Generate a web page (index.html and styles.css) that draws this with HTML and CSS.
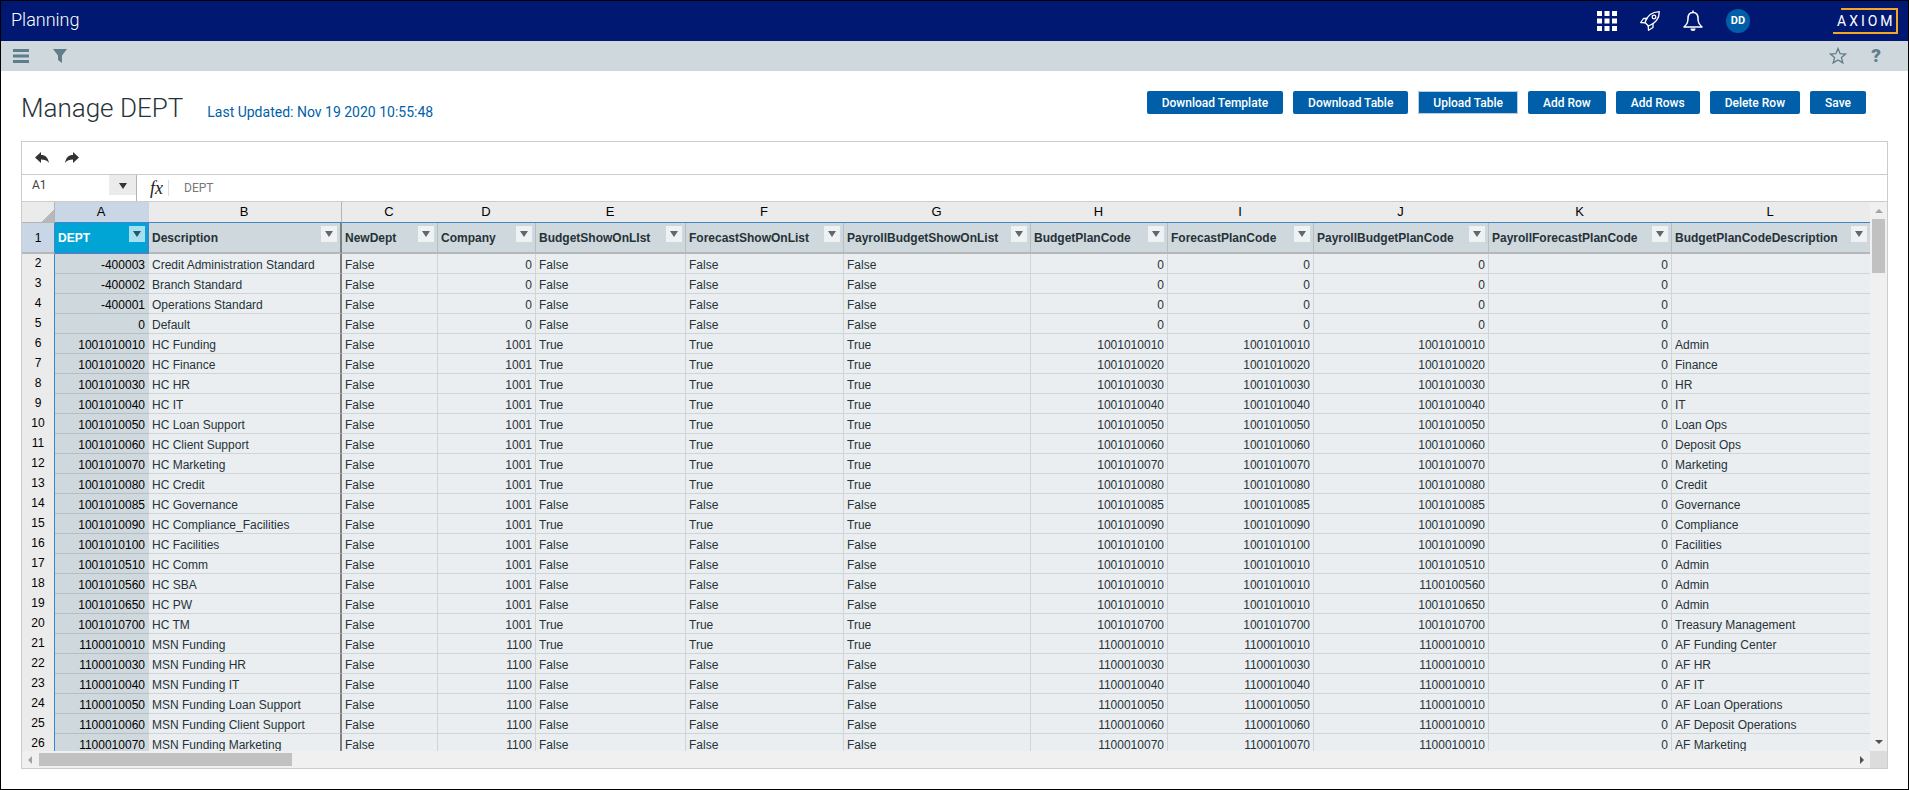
FILE: index.html
```
<!DOCTYPE html>
<html lang="en">

<head>
    <meta charset="utf-8">
    <meta name="viewport" content="width=device-width, initial-scale=1.0">

    <title>Planning - Manage DEPT</title>
    <link rel="stylesheet" href="styles.css">
</head>

<body>
    <header class="topbar">
        <span class="product">Planning</span>
        <div class="topbar-icons">
            <button class="icon-button" aria-label="Applications">
                <svg width="20" height="20" viewBox="0 0 20 20" fill="#fff">
                    <path d="M0 0h5v5H0zM7.500 0h5v5h-5zM15 0h5v5h-5zM0 7.500h5v5H0zM7.500 7.500h5v5h-5zM15 7.500h5v5h-5zM0 15h5v5H0zM7.500 15h5v5h-5zM15 15h5v5h-5z" />
                </svg>
            </button>
            <button class="icon-button" aria-label="Quick launch">
                <svg width="20" height="20" viewBox="0 0 20 20" fill="none" stroke="#fff" stroke-width="1.300" stroke-linejoin="round" stroke-linecap="round">
                    <path d="M5 11.500C7 5 12 1 19.300.7 19.300 7 16 12 8.500 15z" />
                    <path d="M7 7.500H3.500L.7 11.500l4.300.3M13 12.500v4l-4.500 2.800L8.200 15" />
                    <circle cx="14" cy="6" r="1.800" />
                </svg>
            </button>
            <button class="icon-button" aria-label="Notifications">
                <svg width="20" height="22" viewBox="0 0 20 22" fill="none" stroke="#fff" stroke-width="1.500" stroke-linejoin="round">
                    <path d="M10 2.500c-3.500 0-5 2.500-5 6 0 4.500-1.500 6-4 8.500h18c-2.500-2.500-4-4-4-8.500 0-3.500-1.500-6-5-6z" />
                    <path d="M10 .5v2" />
                    <path d="M7.500 18.500h5a2.500 2.500 0 0 1-5 0z" fill="#fff" stroke="none" />
                </svg>
            </button>
            <button class="avatar" aria-label="Account">DD</button>
            <div class="logo">
                <svg class="logo-frame" width="66" height="28" viewBox="0 0 66 28" fill="none" stroke="#f5a623" stroke-width="2">
                    <path d="M8 2H64V26H0" />
                </svg>
                <span class="logo-text">AXIOM</span>
            </div>
        </div>
    </header>

    <nav class="subbar">
        <button class="icon-button" aria-label="Menu">
            <svg width="16" height="14" viewBox="0 0 16 14" fill="#607d8b">
                <path d="M0 0h16v3H0zM0 5.500h16v3H0zM0 11h16v3H0z" />
            </svg>
        </button>
        <button class="icon-button" aria-label="Filter">
            <svg width="14" height="14" viewBox="0 0 14 14" fill="#607d8b">
                <path d="M0 0h14L9 6.500V14L5 11V6.500z" />
            </svg>
        </button>
        <span class="spacer"></span>
        <button class="icon-button" aria-label="Favorite">
            <svg width="18" height="17" viewBox="0 0 18 17" fill="none" stroke="#607d8b" stroke-width="1.300">
                <path d="M9 1.500l2.100 5.200 5.500.3-4.200 3.500 1.400 5.400L9 12.900l-4.800 3 1.400-5.400L1.400 7l5.500-.3z" />
            </svg>
        </button>
        <button class="icon-button help" aria-label="Help">?</button>
    </nav>

    <main class="page">
        <div class="page-head">
            <h1>Manage DEPT</h1>
            <span class="updated">Last Updated: Nov 19 2020 10:55:48</span>
            <div class="actions">
                <button class="btn">Download Template</button>
                <button class="btn">Download Table</button>
                <button class="btn btn-focus">Upload Table</button>
                <button class="btn">Add Row</button>
                <button class="btn">Add Rows</button>
                <button class="btn">Delete Row</button>
                <button class="btn">Save</button>
            </div>
        </div>

        <section class="sheet">
            <div class="sheet-tools">
                <button class="icon-button" aria-label="Undo">
                    <svg width="14" height="12" viewBox="0 0 14 12" fill="#333">
                        <path d="M6 0v3c4.500 0 7 2.500 8 8-2-3-4.500-3.500-8-3.500V11L0 5.500z" />
                    </svg>
                </button>
                <button class="icon-button" aria-label="Redo">
                    <svg width="14" height="12" viewBox="0 0 14 12" fill="#333">
                        <path d="M8 0v3C3.500 3 1 5.500 0 11c2-3 4.500-3.500 8-3.500V11l6-5.500z" />
                    </svg>
                </button>
            </div>

            <div class="formula-bar">
                <div class="name-box">
                    <input class="name-input" type="text" value="A1" aria-label="Cell">
                    <button class="name-drop" aria-label="Named ranges"><span class="tri-down"></span></button>
                </div>
                <span class="fx">fx</span>
                <input class="formula-input" type="text" value="DEPT" aria-label="Formula">
            </div>

            <div class="grid-area">
                <div class="grid-view">
                    <table class="grid">
                        <colgroup id="cols"></colgroup>
                        <thead>
                            <tr class="letters" id="letters"></tr>
                            <tr class="titles" id="titles"></tr>
                        </thead>
                        <tbody id="rows"></tbody>
                    </table>
                </div>
                <div class="vscroll">
                    <span class="tri-up"></span>
                    <div class="vthumb"></div>
                    <span class="spacer"></span>
                    <span class="tri-down dark"></span>
                </div>
                <div class="hscroll">
                    <span class="tri-left"></span>
                    <div class="hthumb"></div>
                    <span class="spacer"></span>
                    <span class="tri-right"></span>
                </div>
                <div class="corner"></div>
            </div>
        </section>
    </main>

    <script>
        // name, width, 1 if the column is numeric
        const columns = [
            ['DEPT', 94, 1],
            ['Description', 193, 0],
            ['NewDept', 96, 0],
            ['Company', 98, 1],
            ['BudgetShowOnLIst', 150, 0],
            ['ForecastShowOnList', 158, 0],
            ['PayrollBudgetShowOnList', 187, 0],
            ['BudgetPlanCode', 137, 1],
            ['ForecastPlanCode', 146, 1],
            ['PayrollBudgetPlanCode', 175, 1],
            ['PayrollForecastPlanCode', 183, 1],
            ['BudgetPlanCodeDescription', 198, 0]
        ];

        // dept, description, company, show on list, plan code, payroll plan code, plan code description
        const depts = [
            ['-400003', 'Credit Administration Standard', 0, 'False', 0, 0, ''],
            ['-400002', 'Branch Standard', 0, 'False', 0, 0, ''],
            ['-400001', 'Operations Standard', 0, 'False', 0, 0, ''],
            ['0', 'Default', 0, 'False', 0, 0, ''],
            ['1001010010', 'HC Funding', 1001, 'True', 1001010010, 1001010010, 'Admin'],
            ['1001010020', 'HC Finance', 1001, 'True', 1001010020, 1001010020, 'Finance'],
            ['1001010030', 'HC HR', 1001, 'True', 1001010030, 1001010030, 'HR'],
            ['1001010040', 'HC IT', 1001, 'True', 1001010040, 1001010040, 'IT'],
            ['1001010050', 'HC Loan Support', 1001, 'True', 1001010050, 1001010050, 'Loan Ops'],
            ['1001010060', 'HC Client Support', 1001, 'True', 1001010060, 1001010060, 'Deposit Ops'],
            ['1001010070', 'HC Marketing', 1001, 'True', 1001010070, 1001010070, 'Marketing'],
            ['1001010080', 'HC Credit', 1001, 'True', 1001010080, 1001010080, 'Credit'],
            ['1001010085', 'HC Governance', 1001, 'False', 1001010085, 1001010085, 'Governance'],
            ['1001010090', 'HC Compliance_Facilities', 1001, 'True', 1001010090, 1001010090, 'Compliance'],
            ['1001010100', 'HC Facilities', 1001, 'False', 1001010100, 1001010090, 'Facilities'],
            ['1001010510', 'HC Comm', 1001, 'False', 1001010010, 1001010510, 'Admin'],
            ['1001010560', 'HC SBA', 1001, 'False', 1001010010, 1100100560, 'Admin'],
            ['1001010650', 'HC PW', 1001, 'False', 1001010010, 1001010650, 'Admin'],
            ['1001010700', 'HC TM', 1001, 'True', 1001010700, 1001010700, 'Treasury Management'],
            ['1100010010', 'MSN Funding', 1100, 'True', 1100010010, 1100010010, 'AF Funding Center'],
            ['1100010030', 'MSN Funding HR', 1100, 'False', 1100010030, 1100010010, 'AF HR'],
            ['1100010040', 'MSN Funding IT', 1100, 'False', 1100010040, 1100010010, 'AF IT'],
            ['1100010050', 'MSN Funding Loan Support', 1100, 'False', 1100010050, 1100010010, 'AF Loan Operations'],
            ['1100010060', 'MSN Funding Client Support', 1100, 'False', 1100010060, 1100010010, 'AF Deposit Operations'],
            ['1100010070', 'MSN Funding Marketing', 1100, 'False', 1100010070, 1100010010, 'AF Marketing']
        ];

        let cols = '<col class="col-head">';
        let letters = '<td class="select-all"></td>';
        let titles = '<th class="row-no" scope="row">1</th>';

        columns.forEach((col, i) => {
            cols += `<col style="width: ${col[1]}px">`;
            letters += `<th scope="col">${String.fromCharCode(65 + i)}</th>`;
            titles += `<td><div class="title">${col[0]}<button class="filter" aria-label="Filter ${col[0]}"><span class="tri-down"></span></button></div></td>`;
        });

        document.getElementById('cols').innerHTML = cols;
        document.getElementById('letters').innerHTML = letters;
        document.getElementById('titles').innerHTML = titles;

        document.getElementById('rows').innerHTML = depts.map((d, r) => {
            const [dept, name, company, show, plan, payroll, planName] = d;
            const cells = [dept, name, 'False', company, show, show, show, plan, plan, payroll, 0, planName];
            return `<tr><th class="row-no" scope="row">${r + 2}</th>` +
                cells.map((c, i) => `<td${columns[i][2] ? ' class="num"' : ''}>${c}</td>`).join('') + '</tr>';
        }).join('');
    </script>
</body>

</html>
```
FILE: styles.css
```
* {
    box-sizing: border-box;
}

body {
    margin: 0;
    height: 100vh;
    display: flex;
    flex-direction: column;
    border: 1px solid #000;
    background-color: #fff;
    font-family: Roboto, sans-serif;
    color: #263238;
}

button {
    font-family: inherit;
    border: none;
    padding: 0;
    cursor: pointer;
}

input {
    font-family: inherit;
    border: none;
    padding: 0;
    outline: none;
    background: none;
}

.spacer {
    flex: 1;
}

.icon-button {
    display: flex;
    align-items: center;
    justify-content: center;
    background: none;
}

/* top bars */

.topbar {
    display: flex;
    align-items: center;
    justify-content: space-between;
    height: 40px;
    flex-shrink: 0;
    padding: 0 9px 1px 10px;
    background-color: #001872;
    color: #fff;
}

.product {
    font-size: 18px;
    line-height: 20px;
    padding-bottom: 1px;
    font-weight: 300;
}

.topbar-icons {
    display: flex;
    align-items: center;
    gap: 23px;
}

.avatar {
    width: 24px;
    height: 24px;
    border-radius: 50%;
    background-color: #005fa8;
    color: #fff;
    font-size: 11px;
    font-weight: 700;
}

.logo {
    display: grid;
    margin-left: 60px;
}

.logo-frame,
.logo-text {
    grid-area: 1 / 1;
}

.logo-text {
    align-self: center;
    padding-left: 4px;
    font-size: 14px;
    letter-spacing: 3px;
}

.subbar {
    display: flex;
    align-items: center;
    height: 30px;
    flex-shrink: 0;
    gap: 24px;
    padding: 0 27px 1px 12px;
    background-color: #cfd8dc;
}

.help {
    font-size: 19px;
    font-weight: 900;
    color: #607d8b;
}

/* page */

.page {
    flex: 1;
    min-height: 0;
    display: flex;
    flex-direction: column;
    padding: 19px 20px 20px 20px;
}

.page-head {
    display: flex;
    align-items: baseline;
    height: 51px;
    flex-shrink: 0;
}

h1 {
    margin: 0;
    font-size: 26px;
    line-height: 36px;
    font-weight: 300;
}

.updated {
    margin-left: 24px;
    font-size: 14px;
    color: #005fa8;
}

.actions {
    display: flex;
    align-self: flex-start;
    gap: 10px;
    margin-left: auto;
    padding: 1px 22px 0 0;
}

.btn {
    height: 23px;
    padding: 0 15px;
    border-radius: 2px;
    background-color: #005fa8;
    color: #fff;
    font-size: 12px;
    font-weight: 500;
    white-space: nowrap;
}

.btn-focus {
    box-shadow: inset 0 0 0 1px #b9cfe0;
}

/* spreadsheet */

.sheet {
    flex: 1;
    min-height: 0;
    display: flex;
    flex-direction: column;
    border: 1px solid #ccc;
}

.sheet-tools {
    display: flex;
    align-items: center;
    gap: 16px;
    height: 33px;
    flex-shrink: 0;
    padding-left: 13px;
    border-bottom: 1px solid #ccc;
}

.formula-bar {
    display: flex;
    align-items: center;
    height: 27px;
    flex-shrink: 0;
    border-bottom: 1px solid #ccc;
}

.name-box {
    display: flex;
    align-items: flex-start;
    align-self: stretch;
    width: 115px;
    border-right: 1px solid #b4b4b4;
}

.name-input {
    flex: 1;
    min-width: 0;
    height: 20px;
    padding-left: 10px;
    font-size: 12px;
    color: #444;
}

.name-drop {
    display: flex;
    align-items: center;
    justify-content: center;
    width: 27px;
    height: 20px;
    padding-top: 2px;
    background-color: #ebebeb;
}

.fx {
    width: 32px;
    padding-left: 13px;
    border-right: 1px solid #ddd;
    font: italic 18px/16px "Liberation Serif", serif;
    color: #222;
}

.formula-input {
    flex: 1;
    padding-left: 15px;
    font-size: 12px;
    color: #777;
}

.tri-down,
.tri-up,
.tri-left,
.tri-right {
    width: 0;
    height: 0;
    border: 4px solid transparent;
}

.tri-down {
    border-top: 6px solid #333;
    border-bottom: none;
}

.tri-down.dark {
    border-top: 4px solid #505050;
}

.tri-up {
    border-bottom: 4px solid #a3a3a3;
    border-top: none;
}

.tri-left {
    border-right: 4px solid #a3a3a3;
    border-left: none;
}

.tri-right {
    border-left: 4px solid #505050;
    border-right: none;
}

.grid-area {
    flex: 1;
    min-height: 0;
    display: grid;
    grid-template-columns: minmax(0, 1fr) 17px;
    grid-template-rows: minmax(0, 1fr) 17px;
    font-family: "Liberation Sans", Arial, sans-serif;
    font-size: 12px;
}

.grid-view {
    overflow: hidden;
}

.grid {
    width: 100%;
    table-layout: fixed;
    border-collapse: separate;
    border-spacing: 0;
}

.col-head {
    width: 33px;
}

.grid th,
.grid td {
    padding: 0 3px;
    white-space: nowrap;
    overflow: hidden;
}

.grid .letters th,
.grid .select-all {
    height: 21px;
    padding: 0 4px 1px 2px;
    background-color: #ebebeb;
    border-bottom: 1px solid #3c87c7;
    font-weight: 400;
    font-size: 13px;
    line-height: 16px;
    color: #000;
}

.grid .letters th:nth-child(2) {
    background-color: #c8d6e5;
}

.letters th:nth-child(3) {
    border-right: 1px solid #b4b4b4;
}

.grid .select-all {
    border-right: 1px solid #b4b4b4;
    border-bottom-color: #b4b4b4;
    background-image: linear-gradient(135deg, transparent 50%, #b8b8b8 50%);
    background-repeat: no-repeat;
    background-position: right bottom;
    background-size: 12px 12px;
}

.row-no {
    background-color: #ebebeb;
    border-right: 1px solid #3c87c7;
    font-weight: 400;
    color: #000;
}

.grid tbody .row-no {
    padding-bottom: 2px;
}

.grid tbody td {
    height: 20px;
    padding-top: 3px;
    line-height: 16px;
    background-color: #eaeef1;
    border-right: 1px solid #cfd4d7;
    border-bottom: 1px solid #cfd4d7;
}

.grid tbody td:nth-child(2) {
    background-color: #cfd8dc;
    border-color: #cfd8dc;
    border-bottom-color: #b3bfc4;
    color: #000;
}

.grid tr td:nth-child(3) {
    border-right: 2px solid #808080;
}

.grid tr td:last-child {
    border-right: none;
}

.num {
    text-align: right;
}

.titles .row-no {
    background-color: #c8d6e5;
}

.titles td,
.titles .row-no {
    height: 31px;
    border-bottom: 2px solid #b4b8ba;
}

.titles td {
    background-color: #cfd8dc;
    border-right: 1px solid #b3bfc4;
    font-weight: 700;
}

.grid .titles td:nth-child(2) {
    padding-right: 2px;
    background-color: #00a5d5;
    border: 2px solid #3c87c7;
    border-top: none;
    border-left: none;
    color: #fff;
}

.title {
    display: flex;
    align-items: center;
    justify-content: space-between;
}

.filter {
    display: flex;
    justify-content: center;
    width: 16px;
    height: 16px;
    flex-shrink: 0;
    margin-bottom: 8px;
    padding-top: 5px;
    background-color: #eef2f4;
}

.filter .tri-down {
    border-top-color: #666;
}

.titles td:nth-child(2) .filter {
    background-color: #a6dff0;
}

.titles td:nth-child(2) .tri-down {
    border-top-color: #24586a;
}

/* scrollbars */

.vscroll,
.hscroll {
    display: flex;
    align-items: center;
    background-color: #f0f0f0;
}

.vscroll {
    flex-direction: column;
    padding: 7px 0;
}

.hscroll {
    padding: 0 6px;
}

.vthumb {
    width: 13px;
    height: 54px;
    margin-top: 6px;
    background-color: #c1c1c1;
}

.hthumb {
    width: 253px;
    height: 13px;
    margin-left: 7px;
    background-color: #c1c1c1;
}

.corner {
    background-color: #dcdcdc;
}
```
